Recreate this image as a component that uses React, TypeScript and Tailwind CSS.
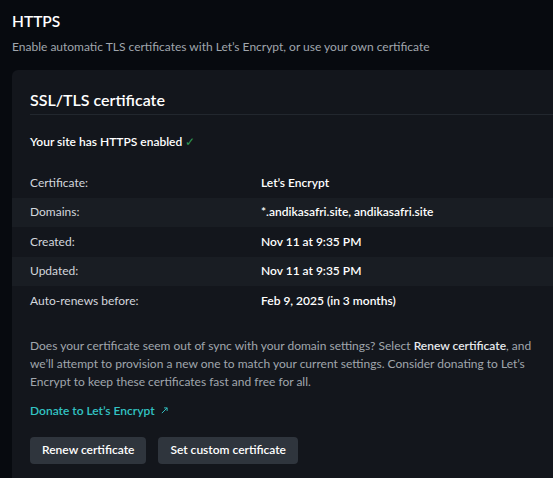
const rows = [
  { label: 'Certificate:', value: 'Let’s Encrypt' },
  { label: 'Domains:', value: '*.andikasafri.site, andikasafri.site' },
  { label: 'Created:', value: 'Nov 11 at 9:35 PM' },
  { label: 'Updated:', value: 'Nov 11 at 9:35 PM' },
  { label: 'Auto-renews before:', value: 'Feb 9, 2025 (in 3 months)' },
];

export default function App() {
  return (
    <div
      className="min-h-[478px] w-[553px] overflow-hidden bg-[#070a0f] text-white"
      style={{ fontFamily: 'Lato, "Noto Sans", sans-serif' }}
    >
      <div className="pl-3 pt-[10px]">
        <h1 className="text-[15.5px] font-semibold leading-[22px]">HTTPS</h1>
        <p className="mt-[7px] text-[12px] leading-[16px] text-[#a0a6ad]">
          Enable automatic TLS certificates with Let’s Encrypt, or use your own certificate
        </p>

        {/* Card */}
        <div className="mt-[15px] w-[560px] rounded-tl-md bg-[#13161c] pb-6">
          <div className="px-[18px] pt-[19px]">
            <h2 className="pb-[3px] text-[16px] font-semibold leading-[22px] border-b border-[#22272e]">
              SSL/TLS certificate
            </h2>
            <p className="mt-[19px] text-[12px] font-semibold leading-[16px]">
              Your site has HTTPS enabled <span className="font-normal text-[#2f9a57]">✓</span>
            </p>
          </div>

          <div className="mt-[18px]">
            {rows.map((r, i) => (
              <div
                key={r.label}
                className={`flex h-[29.5px] items-center px-[18px] text-[12px] ${i % 2 === 1 ? 'bg-[#191d23]' : ''}`}
              >
                <span className="w-[231px] text-[#d3d7dc]">{r.label}</span>
                <span className="font-semibold">{r.value}</span>
              </div>
            ))}
          </div>

          <div className="px-[18px]">
            <p className="mt-[21px] w-[505px] text-[12px] leading-[18px] text-[#a0a6ad]">
              Does your certificate seem out of sync with your domain settings? Select{' '}
              <span className="font-semibold text-[#e6e9ec]">Renew certificate</span>, and we’ll attempt to
              provision a new one to match your current settings. Consider donating to Let’s Encrypt to keep
              these certificates fast and free for all.
            </p>
            <a className="mt-[11px] flex items-center gap-[6px] text-[12px] font-semibold text-[#32c3c3]">
              Donate to Let’s Encrypt
              <svg width="7" height="7" viewBox="0 0 8 8" fill="none" stroke="currentColor" strokeWidth="1.1">
                <path d="M1 7L7 1M3.5 1H7v3.5" />
              </svg>
            </a>
            <div className="mt-[17px] flex gap-3">
              <button className="h-[27px] rounded-[4px] bg-[#2f353d] px-3 text-[12px] font-semibold text-white">
                Renew certificate
              </button>
              <button className="h-[27px] rounded-[4px] bg-[#2f353d] px-3 text-[12px] font-semibold text-white">
                Set custom certificate
              </button>
            </div>
          </div>
        </div>
      </div>
    </div>
  );
}
